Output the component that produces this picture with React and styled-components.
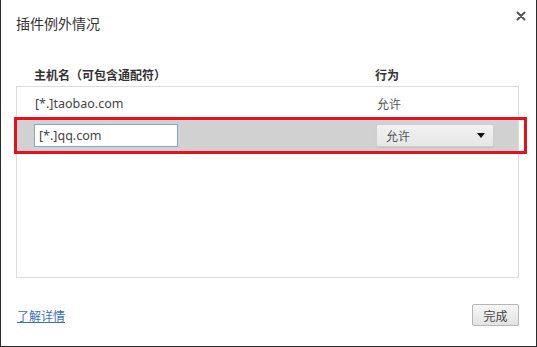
import React from "react";
import styled, { createGlobalStyle } from "styled-components";

const GlobalStyle = createGlobalStyle`
  html, body {
    margin: 0;
    padding: 0;
    background: #ffffff;
  }
  body {
    font-family: "Noto Sans", "Noto Sans CJK SC", sans-serif;
  }
`;

const Dialog = styled.div`
  box-sizing: border-box;
  width: 537px;
  height: 347px;
  background: #fff;
  border-left: 1px solid #2b2b2b;
  border-right: 1px solid #2b2b2b;
  border-bottom: 1px solid #2b2b2b;
  padding: 0 17px 0 15px;
  display: flex;
  flex-direction: column;
`;

const Header = styled.div`
  display: flex;
  justify-content: space-between;
  align-items: flex-start;
  height: 64px;
  margin-right: -10px;
`;

const Title = styled.h1`
  margin: 13px 0 0;
  font-family: "Noto Sans CJK SC", sans-serif;
  font-size: 14px;
  font-weight: 400;
  line-height: 20px;
  color: #333;
`;

const Close = styled.button`
  margin-top: 8px;
  width: 16px;
  height: 16px;
  padding: 0;
  border: none;
  background: none;
  display: flex;
  align-items: center;
  justify-content: center;
  cursor: pointer;
`;

const ColumnHead = styled.div`
  display: grid;
  grid-template-columns: 341px 1fr;
  padding-left: 18px;
  height: 21px;
  align-items: center;
  font-family: "Noto Sans CJK SC", sans-serif;
  font-size: 12px;
  font-weight: 700;
  color: #333;
`;

const List = styled.div`
  box-sizing: border-box;
  height: 192px;
  margin-top: 1px;
  border: 1px solid #dcdcdc;
  display: flex;
  flex-direction: column;
`;

const Row = styled.div`
  position: relative;
  display: grid;
  grid-template-columns: 342px 1fr;
  align-items: center;
  height: ${(p) => (p.$selected ? "31px" : "32px")};
  margin-bottom: ${(p) => (p.$selected ? "0" : "1px")};
  padding-left: ${(p) => (p.$selected ? "17px" : "18px")};
  background: ${(p) => (p.$selected ? "#d1d1d1" : "transparent")};
  font-size: 12.5px;
  color: #444;
`;

const Cjk = styled.span`
  font-family: "Noto Sans CJK SC", sans-serif;
  font-size: 12px;
  color: #555;
`;

const Highlight = styled.span`
  position: absolute;
  left: -3px;
  right: -9px;
  top: -3px;
  bottom: -3px;
  border: 3px solid #e8101c;
  pointer-events: none;
`;

const TextInput = styled.input`
  box-sizing: border-box;
  width: 144px;
  height: 23px;
  padding: 0 4px;
  border: 1px solid #7fa6dc;
  background: #fff;
  font-family: "Noto Sans", sans-serif;
  font-size: 12.5px;
  color: #444;
  outline: none;
`;

const Select = styled.div`
  box-sizing: border-box;
  width: 118px;
  height: 23px;
  padding: 0 8px 0 9px;
  display: flex;
  align-items: center;
  justify-content: space-between;
  background: linear-gradient(#f2f2f2, #e6e6e6);
  border: 1px solid #cfcfcf;
  border-radius: 2px;
  box-shadow: 0 1px 1px rgba(0, 0, 0, 0.08);
`;

const Arrow = styled.span`
  width: 0;
  height: 0;
  border-left: 4.5px solid transparent;
  border-right: 4.5px solid transparent;
  border-top: 5px solid #111;
`;

const Footer = styled.div`
  flex: 1;
  display: flex;
  justify-content: space-between;
  align-items: center;
  padding: 8px 0 2px 1px;
`;

const LearnMore = styled.a`
  font-family: "Noto Sans CJK SC", sans-serif;
  font-size: 12px;
  color: #3b6fc2;
  text-decoration: underline;
  cursor: pointer;
`;

const Done = styled.button`
  box-sizing: border-box;
  width: 47px;
  height: 22px;
  padding: 0;
  border: 1px solid #b5b5b5;
  border-radius: 2px;
  background: linear-gradient(#f6f6f6, #e3e3e3);
  font-family: "Noto Sans CJK SC", sans-serif;
  font-size: 12px;
  color: #444;
`;

export default function App() {
  return (
    <>
      <GlobalStyle />
      <Dialog>
        <Header>
          <Title>插件例外情况</Title>
          <Close aria-label="关闭">
            <svg width="10" height="10" viewBox="0 0 10 10">
              <path d="M1.5 1.5 L8.5 8.5 M8.5 1.5 L1.5 8.5" stroke="#555" strokeWidth="2" strokeLinecap="round" />
            </svg>
          </Close>
        </Header>
        <ColumnHead>
          <span>主机名（可包含通配符）</span>
          <span>行为</span>
        </ColumnHead>
        <List>
          <Row>
            <span>[*.]taobao.com</span>
            <Cjk>允许</Cjk>
          </Row>
          <Row $selected>
            <Highlight />
            <TextInput defaultValue="[*.]qq.com" />
            <Select>
              <Cjk>允许</Cjk>
              <Arrow />
            </Select>
          </Row>
        </List>
        <Footer>
          <LearnMore>了解详情</LearnMore>
          <Done>完成</Done>
        </Footer>
      </Dialog>
    </>
  );
}
